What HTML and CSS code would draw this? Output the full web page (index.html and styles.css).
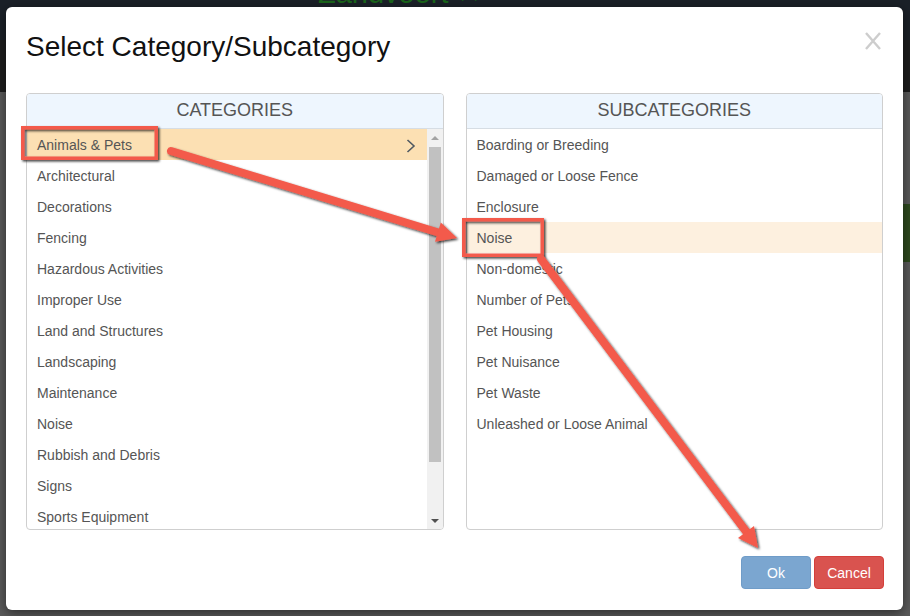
FILE: index.html
```html
<!DOCTYPE html>
<html lang="en">
<head>
    <meta charset="UTF-8">
    <meta name="viewport" content="width=device-width, initial-scale=1.0">
    <title>Select Category/Subcategory</title>
    <link rel="stylesheet" href="styles.css">
</head>
<body>

    <!-- Page behind the dialog (dimmed) -->
    <div class="backdrop">
        <div class="topbar"><span class="brand">Zandvoort ✕</span></div>
        <div class="subbar"></div>
        <div class="page-body">
            <div class="side-block"></div>
        </div>
    </div>

    <!-- Category dialog -->
    <div class="modal">
        <div class="modal-header">
            <h4 class="modal-title">Select Category/Subcategory</h4>
            <button class="close" type="button">
                <svg width="18" height="18" viewBox="0 0 18 18">
                    <path d="M2 1 L16 17 M16 1 L2 17" stroke="#cdcdcd" stroke-width="2.4" fill="none"/>
                </svg>
            </button>
        </div>

        <div class="modal-body">
            <!-- Categories -->
            <div class="panel">
                <div class="panel-heading">Categories</div>
                <div class="list-wrap">
                    <ul class="list">
                        <li class="item selected">
                            <span>Animals &amp; Pets</span>
                            <svg class="chevron" width="10" height="14" viewBox="0 0 10 14">
                                <polyline points="1.5,1 8,7 1.5,13" fill="none" stroke="#505a63" stroke-width="1.6"/>
                            </svg>
                        </li>
                        <li class="item">Architectural</li>
                        <li class="item">Decorations</li>
                        <li class="item">Fencing</li>
                        <li class="item">Hazardous Activities</li>
                        <li class="item">Improper Use</li>
                        <li class="item">Land and Structures</li>
                        <li class="item">Landscaping</li>
                        <li class="item">Maintenance</li>
                        <li class="item">Noise</li>
                        <li class="item">Rubbish and Debris</li>
                        <li class="item">Signs</li>
                        <li class="item">Sports Equipment</li>
                    </ul>
                    <div class="scrollbar">
                        <div class="scroll-btn"><span class="arrow-up"></span></div>
                        <div class="scroll-thumb"></div>
                        <div class="scroll-track"></div>
                        <div class="scroll-btn"><span class="arrow-down"></span></div>
                    </div>
                </div>
            </div>

            <!-- Subcategories -->
            <div class="panel">
                <div class="panel-heading">Subcategories</div>
                <div class="list-wrap">
                    <ul class="list">
                        <li class="item">Boarding or Breeding</li>
                        <li class="item">Damaged or Loose Fence</li>
                        <li class="item">Enclosure</li>
                        <li class="item selected-sub">Noise</li>
                        <li class="item">Non-domestic</li>
                        <li class="item">Number of Pets</li>
                        <li class="item">Pet Housing</li>
                        <li class="item">Pet Nuisance</li>
                        <li class="item">Pet Waste</li>
                        <li class="item">Unleashed or Loose Animal</li>
                    </ul>
                </div>
            </div>
        </div>

        <div class="modal-footer">
            <button class="btn btn-ok" type="button">Ok</button>
            <button class="btn btn-cancel" type="button">Cancel</button>
        </div>
    </div>

    <!-- Screenshot annotations drawn on top -->
    <svg class="annotations" width="910" height="616" viewBox="0 0 910 616">
        <defs>
            <filter id="shadow" x="-10%" y="-10%" width="120%" height="120%">
                <feDropShadow dx="1.5" dy="1.5" stdDeviation="1.2" flood-color="#000" flood-opacity="0.75"/>
            </filter>
        </defs>
        <g filter="url(#shadow)" fill="none" stroke="#f35a4b">
            <rect x="22.75" y="127.75" width="133.5" height="30.5" stroke-width="3.5"/>
            <rect x="463.75" y="219.75" width="78.5" height="35.5" stroke-width="3.5"/>
        </g>
        <g filter="url(#shadow)">
            <line x1="171" y1="151" x2="440" y2="233" stroke="#f35a4b" stroke-width="8" stroke-linecap="round"/>
            <polygon points="457,238 435,241.8 440.8,222.6" fill="#f35a4b"/>
            <line x1="541" y1="259" x2="748" y2="534" stroke="#f35a4b" stroke-width="8" stroke-linecap="round"/>
            <polygon points="758,548 738,538 754,526" fill="#f35a4b"/>
        </g>
    </svg>

</body>
</html>
```

FILE: styles.css
```css
/* Global styles */
body {
    margin: 0;
    width: 910px;
    height: 616px;
    overflow: hidden;
    position: relative;
    font-family: "Liberation Sans", Arial, sans-serif;
    background-color: #585858;
}

/* Dimmed page behind the dialog */
.backdrop {
    display: flex;
    flex-direction: column;
    height: 100%;
}

.topbar {
    height: 40px;
    background-color: #1b2128;
    padding-left: 318px;
    overflow: hidden;
}

.brand {
    display: block;
    margin-top: -22px;
    font-size: 29px;
    line-height: 30px;
    color: #1a651a;
}

.subbar {
    height: 52px;
    background-color: #1d1d1d;
}

.page-body {
    flex: 1;
    position: relative;
    background-color: #5a5a5a;
}

.side-block {
    position: absolute;
    right: 0;
    top: 112px;
    width: 8px;
    height: 58px;
    background-color: #2e4a1f;
}

/* Dialog */
.modal {
    position: absolute;
    top: 7px;
    left: 6px;
    width: 897px;
    height: 603px;
    box-sizing: border-box;
    background-color: #fff;
    border-radius: 6px;
    box-shadow: 0 3px 12px rgba(0, 0, 0, 0.5);
    display: flex;
    flex-direction: column;
}

.modal-header {
    display: flex;
    justify-content: space-between;
    align-items: flex-start;
    height: 56px;
    box-sizing: border-box;
    padding: 25px 21px 0 20px;
}

.modal-title {
    margin: 0;
    font-size: 28px;
    line-height: 30px;
    font-weight: normal;
    color: #111;
}

.close {
    margin-top: 0;
    padding: 0;
    border: none;
    background: none;
    line-height: 0;
}

.modal-body {
    display: flex;
    gap: 22px;
    padding: 30px 20px 0 20px;
}

/* List panels */
.panel {
    flex: 1;
    height: 437px;
    box-sizing: border-box;
    border: 1px solid #cfcfcf;
    border-radius: 4px;
    display: flex;
    flex-direction: column;
    overflow: hidden;
}

.panel-heading {
    height: 35px;
    box-sizing: border-box;
    line-height: 32px;
    border-bottom: 1px solid #d6dde4;
    background-color: #eef6fe;
    text-align: center;
    font-size: 18px;
    color: #555;
    text-transform: uppercase;
}

.list-wrap {
    flex: 1;
    display: flex;
    overflow: hidden;
}

.list {
    flex: 1;
    margin: 0;
    padding: 0;
    list-style: none;
}

.item {
    display: flex;
    justify-content: space-between;
    align-items: center;
    height: 31px;
    box-sizing: border-box;
    line-height: 29px;
    padding: 2px 11px 0 10px;
    font-size: 14px;
    color: #555;
}

.item.selected {
    background-color: #fce0b3;
}

.item.selected-sub {
    background-color: #fdf0df;
}

/* Drawn scrollbar for the category list */
.scrollbar {
    width: 16px;
    display: flex;
    flex-direction: column;
    background-color: #f1f1f1;
}

.scroll-btn {
    height: 17px;
    display: flex;
    justify-content: center;
    align-items: center;
}

.arrow-up {
    width: 0;
    height: 0;
    border-left: 4px solid transparent;
    border-right: 4px solid transparent;
    border-bottom: 4px solid #a3a3a3;
}

.arrow-down {
    width: 0;
    height: 0;
    border-left: 4px solid transparent;
    border-right: 4px solid transparent;
    border-top: 4px solid #505050;
}

.scroll-thumb {
    height: 315px;
    margin: 1px 2px 0 2px;
    background-color: #c1c1c1;
}

.scroll-track {
    flex: 1;
}

/* Footer buttons */
.modal-footer {
    display: flex;
    justify-content: flex-end;
    gap: 3px;
    padding: 26px 19px 0 0;
}

.btn {
    width: 70px;
    height: 33px;
    box-sizing: border-box;
    border-radius: 4px;
    font-family: "Liberation Sans", Arial, sans-serif;
    font-size: 14px;
    color: #fff;
    cursor: pointer;
}

.btn-ok {
    background-color: #7ba6d0;
    border: 1px solid #6f9cc8;
}

.btn-cancel {
    background-color: #d9534f;
    border: 1px solid #d43f3a;
}

/* Annotation layer */
.annotations {
    position: absolute;
    top: 0;
    left: 0;
    pointer-events: none;
}
```
